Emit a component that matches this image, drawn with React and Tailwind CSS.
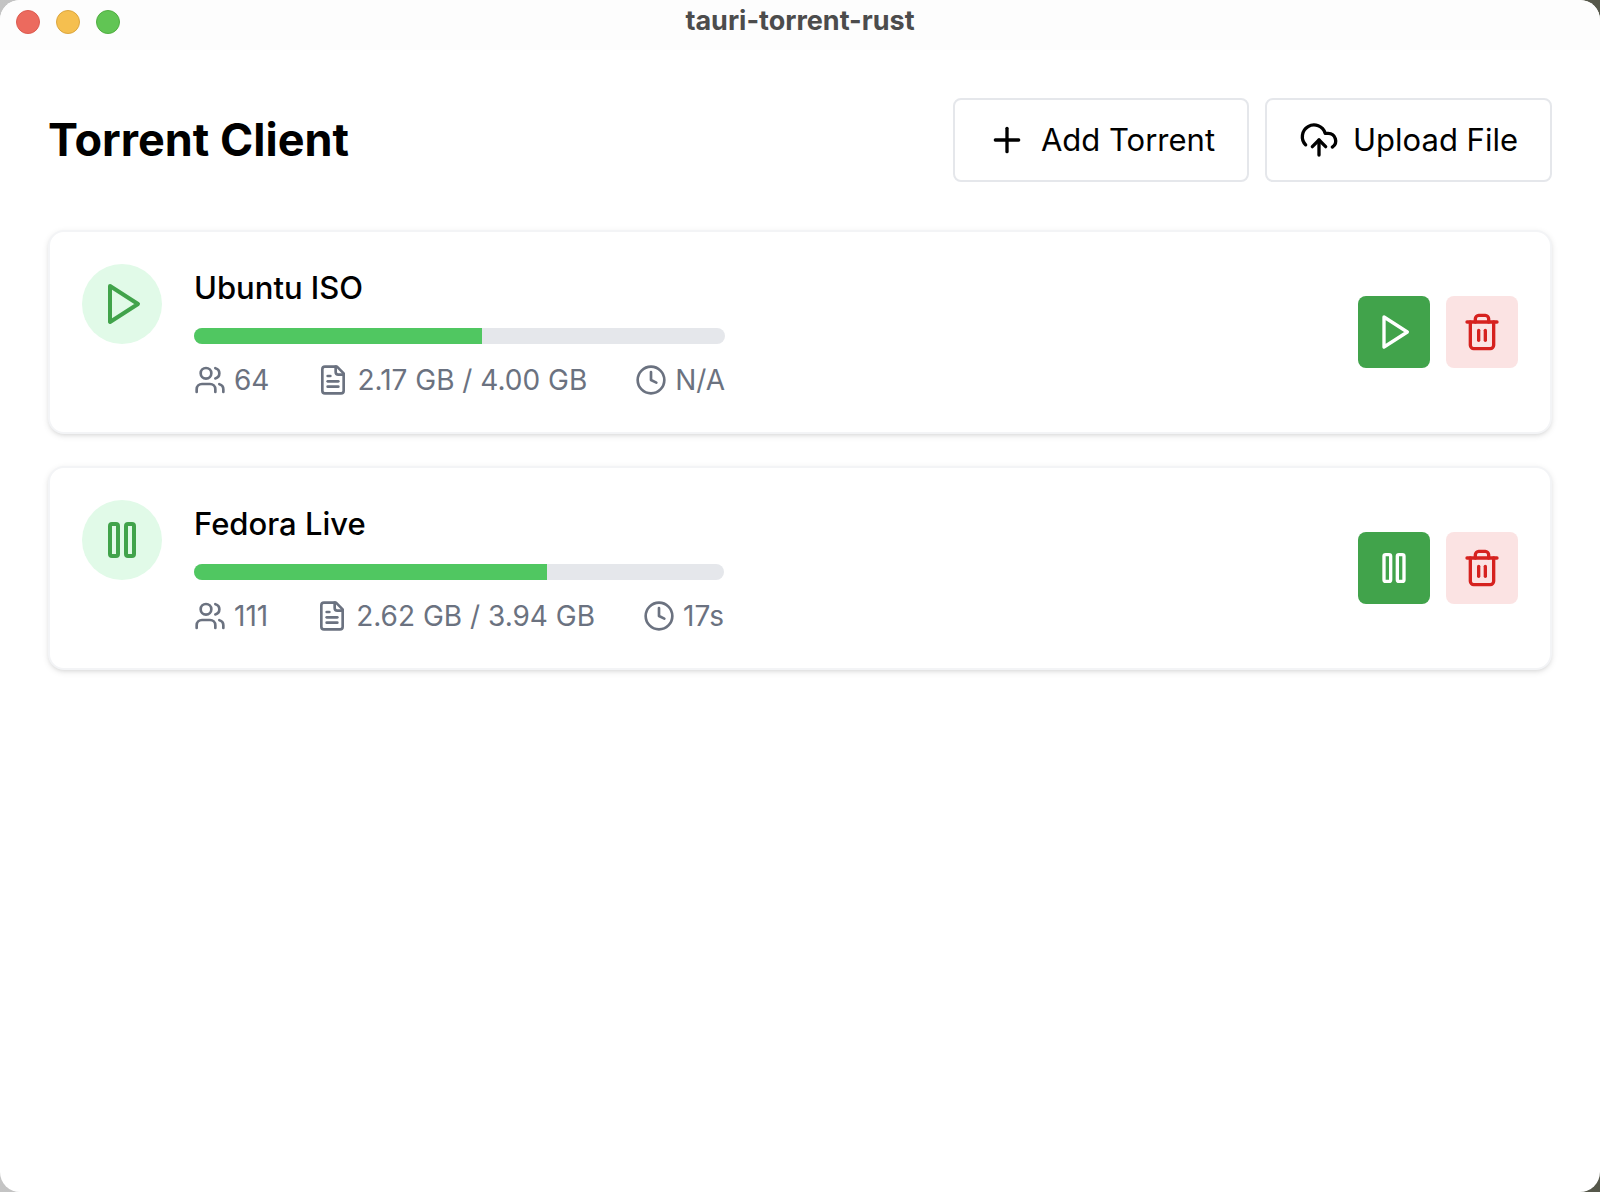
function Icon({ className, children }) {
  return (
    <svg
      className={className}
      viewBox="0 0 24 24"
      fill="none"
      stroke="currentColor"
      strokeWidth="2"
      strokeLinecap="round"
      strokeLinejoin="round"
      aria-hidden="true"
    >
      {children}
    </svg>
  );
}

const PlayIcon = ({ className }) => (
  <Icon className={className}>
    <polygon points="6 3 20 12 6 21 6 3" />
  </Icon>
);

const PauseIcon = ({ className }) => (
  <Icon className={className}>
    <rect x="14" y="4" width="4" height="16" rx="1" />
    <rect x="6" y="4" width="4" height="16" rx="1" />
  </Icon>
);

const PlusIcon = ({ className }) => (
  <Icon className={className}>
    <path d="M5 12h14" />
    <path d="M12 5v14" />
  </Icon>
);

const CloudUploadIcon = ({ className }) => (
  <Icon className={className}>
    <path d="M4 14.899A7 7 0 1 1 15.71 8h1.79a4.5 4.5 0 0 1 2.5 8.242" />
    <path d="M12 12v9" />
    <path d="m16 16-4-4-4 4" />
  </Icon>
);

const UsersIcon = ({ className }) => (
  <Icon className={className}>
    <path d="M16 21v-2a4 4 0 0 0-4-4H6a4 4 0 0 0-4 4v2" />
    <circle cx="9" cy="7" r="4" />
    <path d="M22 21v-2a4 4 0 0 0-3-3.87" />
    <path d="M16 3.13a4 4 0 0 1 0 7.75" />
  </Icon>
);

const FileIcon = ({ className }) => (
  <Icon className={className}>
    <path d="M15 2H6a2 2 0 0 0-2 2v16a2 2 0 0 0 2 2h12a2 2 0 0 0 2-2V7Z" />
    <path d="M14 2v4a2 2 0 0 0 2 2h4" />
    <path d="M10 9H8" />
    <path d="M16 13H8" />
    <path d="M16 17H8" />
  </Icon>
);

const ClockIcon = ({ className }) => (
  <Icon className={className}>
    <circle cx="12" cy="12" r="10" />
    <polyline points="12 6 12 12 16 14" />
  </Icon>
);

const TrashIcon = ({ className }) => (
  <Icon className={className}>
    <path d="M3 6h18" />
    <path d="M19 6v14c0 1-1 2-2 2H7c-1 0-2-1-2-2V6" />
    <path d="M8 6V4c0-1 1-2 2-2h4c1 0 2 1 2 2v2" />
    <path d="M10 11v6" />
    <path d="M14 11v6" />
  </Icon>
);

const torrents = [
  { name: "Ubuntu ISO", icon: PlayIcon, action: "Resume", progress: 54.25, peers: "64", size: "2.17 GB / 4.00 GB", eta: "N/A" },
  { name: "Fedora Live", icon: PauseIcon, action: "Pause", progress: 66.6, peers: "111", size: "2.62 GB / 3.94 GB", eta: "17s" },
];

function TitleBar() {
  return (
    <div className="grid h-[50px] grid-cols-[1fr_auto_1fr] items-start bg-[#fdfdfd] px-4">
      <div className="flex gap-4 pt-2.5">
        <button aria-label="Close" className="size-6 rounded-full border border-[#dc5b50] bg-[#ec6a5e]" />
        <button aria-label="Minimize" className="size-6 rounded-full border border-[#dba63f] bg-[#f5bf4f]" />
        <button aria-label="Zoom" className="size-6 rounded-full border border-[#51ae42] bg-[#61c554]" />
      </div>
      <div className="text-[27px] leading-[42px] font-bold text-[#4c4c4c]">tauri-torrent-rust</div>
    </div>
  );
}

function HeaderButton({ icon: Glyph, children }) {
  return (
    <button className="flex h-[84px] items-center gap-3.5 rounded-lg border-2 border-[#e5e7eb] px-8 text-[31px]">
      <Glyph className="size-10" />
      {children}
    </button>
  );
}

function Stat({ icon: Glyph, children }) {
  return (
    <span className="flex items-center gap-2">
      <Glyph className="size-8" />
      {children}
    </span>
  );
}

function TorrentCard({ torrent }) {
  const Glyph = torrent.icon;
  return (
    <li className="flex items-center justify-between rounded-2xl border-2 border-[#f3f4f6] bg-white p-8 shadow-[0_2px_6px_rgba(0,0,0,0.1),0_2px_4px_-2px_rgba(0,0,0,0.1)]">
      <div className="flex items-start gap-8">
        <div className="rounded-full bg-[#e1fae8] p-4 text-[#41a34b]">
          <Glyph className="size-12" />
        </div>
        <div className="flex flex-col gap-4">
          <h2 className="text-[31px] leading-[48px] font-medium">{torrent.name}</h2>
          <div
            role="progressbar"
            aria-label={torrent.name}
            aria-valuenow={torrent.progress}
            aria-valuemin={0}
            aria-valuemax={100}
            className="h-4 overflow-hidden rounded-full bg-[#e5e7eb]"
          >
            <div className="h-full bg-[#50c761]" style={{ width: `${torrent.progress}%` }} />
          </div>
          <div className="flex gap-12 text-[28px] leading-10 text-[#6b7280]">
            <Stat icon={UsersIcon}>{torrent.peers}</Stat>
            <Stat icon={FileIcon}>{torrent.size}</Stat>
            <Stat icon={ClockIcon}>{torrent.eta}</Stat>
          </div>
        </div>
      </div>
      <div className="flex gap-4">
        <button aria-label={`${torrent.action} ${torrent.name}`} className="rounded-lg bg-[#41a34b] p-4 text-white">
          <Glyph className="size-10" />
        </button>
        <button aria-label={`Delete ${torrent.name}`} className="rounded-lg bg-[#fbe3e3] p-4 text-[#d6221f]">
          <TrashIcon className="size-10" />
        </button>
      </div>
    </li>
  );
}

export default function App() {
  return (
    <div className="bg-linear-to-r from-[#c4c4c4] to-[#55574a] font-['Inter',sans-serif] text-black">
      <div className="min-h-screen overflow-hidden rounded-[20px] bg-white">
        <TitleBar />
        <main className="flex flex-col gap-12 p-12">
          <header className="flex items-center justify-between">
            <h1 className="text-[45px] leading-[64px] font-bold">Torrent Client</h1>
            <div className="flex gap-4">
              <HeaderButton icon={PlusIcon}>Add Torrent</HeaderButton>
              <HeaderButton icon={CloudUploadIcon}>Upload File</HeaderButton>
            </div>
          </header>
          <ul className="flex flex-col gap-8">
            {torrents.map((t) => (
              <TorrentCard key={t.name} torrent={t} />
            ))}
          </ul>
        </main>
      </div>
    </div>
  );
}
